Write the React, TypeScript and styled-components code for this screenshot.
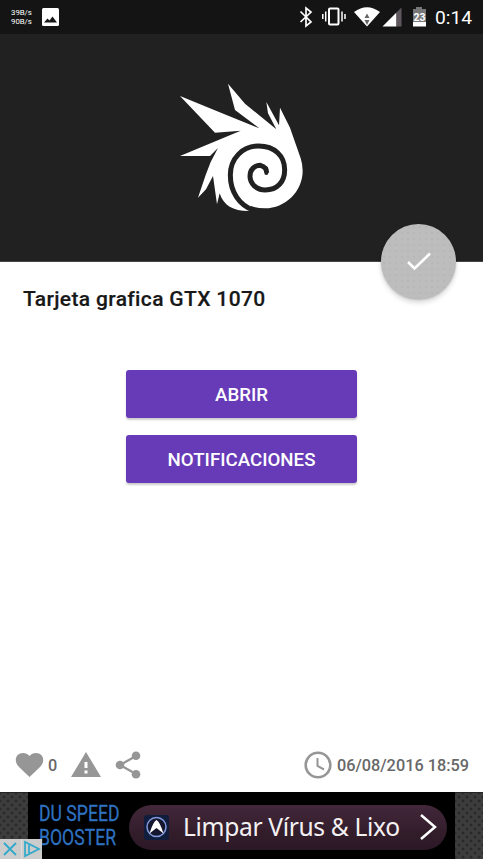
import React from "react";
import styled, { createGlobalStyle } from "styled-components";

const Global = createGlobalStyle`
  * { box-sizing: border-box; }
  body { margin: 0; background: #fff; font-family: Roboto, sans-serif; }
  svg { display: block; flex: none; }
`;
const Screen = styled.main`
  width: 483px; height: 859px; overflow: hidden;
  display: flex; flex-direction: column; background: #fff;
`;
const StatusBar = styled.header`
  height: 34px; flex: none; display: flex; align-items: center;
  padding: 0 11px; background: #141414; color: #fff;
`;
const Traffic = styled.div`
  width: 31px; font-size: 7.8px; line-height: 9px; font-weight: 400;
  white-space: pre;
`;
const StatusIcons = styled.div`margin-left: auto; display: flex; align-items: center;`;
const Clock = styled.time`
  width: 37px; margin-left: 3px; font-size: 19.2px; line-height: 24px;
  font-weight: 400; white-space: nowrap; padding-top: 2px;
`;
const Hero = styled.section`
  position: relative; height: 228px; flex: none; background: #212121;
  border-bottom: 1px solid #444; padding: 41px 0 0 170px;
`;
const CheckButton = styled.button`
  position: absolute; left: 381px; top: 190px; width: 75px; height: 75px;
  border: 0; border-radius: 50%; padding: 0; color: #fff;
  display: grid; place-items: center;
  background: radial-gradient(circle, #adadad 0.5px, transparent 0.8px) 0 0 / 6px 6px, #bdbdbd;
  box-shadow: 0 4px 5px rgba(0,0,0,.14), 0 1px 2px rgba(0,0,0,.18);
`;
const Content = styled.section`flex: 1; display: flex; flex-direction: column; align-items: center;`;
const Title = styled.h1`
  align-self: stretch; margin: 24px 0 0 23px; height: 26px;
  font-size: 21px; line-height: 26px; font-weight: 500; color: #181818;
  letter-spacing: .35px; font-variant-ligatures: none;
  -webkit-text-stroke: .2px #181818; white-space: nowrap;
`;
const Actions = styled.div`margin-top: 58px; display: flex; flex-direction: column; gap: 16.5px;`;
const Action = styled.button`
  width: 231px; height: 48px; border: 0; border-radius: 3px; background: #673ab7;
  color: #fff; font: 500 18.7px/24px Roboto, sans-serif; padding: 2px 0 0;
  box-shadow: 0 2px 2px rgba(0,0,0,.2);
`;
const Meta = styled.footer`
  height: 54px; flex: none; padding: 0 14px 0 15px;
  display: flex; align-items: center; color: #969696;
`;
const MetaText = styled.span`
  color: #686868; font-size: 16.3px; line-height: 24px; font-weight: 500;
  white-space: nowrap; padding-top: 1px;
`;
const Count = styled(MetaText)`width: 23px; margin-left: 4px;`;
const Share = styled.div`margin-left: 14px;`;
const Stamp = styled.div`margin-left: auto; display: flex; gap: 5px; align-items: center;`;
const Ad = styled.aside`
  position: relative; height: 67px; flex: none; display: flex; background: #000;
`;
const Mesh = styled.div`
  width: 28px; flex: none;
  background: radial-gradient(circle, #2b2b2b 1.3px, transparent 1.8px) 0 0 / 8px 8px,
    radial-gradient(circle, #2b2b2b 1.3px, transparent 1.8px) 4px 4px / 8px 8px, #3d3d3d;
  border-top: 1px solid #242424;
`;
const Brand = styled.div`width: 101px; flex: none; padding: 10px 0 0 11px; color: #2e71c0;`;
const BrandLine = styled.div`
  font-size: 22px; line-height: 24px; white-space: nowrap;
  -webkit-text-stroke: .3px #2e71c0;
  transform: scaleX(.8); transform-origin: left;
`;
const Offer = styled.div`
  width: 318px; height: 45px; flex: none; margin: 13px 8px 0 0; padding: 0 9px 0 15px;
  border-radius: 23px; display: flex; align-items: center; color: #f4f1f3;
  background: linear-gradient(#42283a, #331d2b 60%, #2b1826);
`;
const OfferText = styled.span`
  margin-left: 14px; width: 235px; white-space: nowrap;
  font: 400 24.6px/30px "Noto Sans", sans-serif; letter-spacing: -.35px; padding-bottom: 2px;
`;
const AdControls = styled.div`
  position: absolute; left: 0; bottom: 0; width: 42px; height: 20px;
  background: #ccc; display: flex;
`;

const Logo = () => (
  <svg width="140" height="145" viewBox="0 0 420 435">
    <path fill="#fff" d="M30 63L160 116L268 160L195 105L174 26L225 86L319 163L294 115L289 81L327 151L330 98L360 158L392 250Q398 268 398 288C398 350 345 400 285 400Q260 400 242 392L247 408C194 411 161 394 149 355L141 388L129 303L108 343L84 368L107 300L122 261L144 219L120 243L30 243L212 167L135 173Z" />
    <path fill="none" stroke="#212121" strokeWidth="15" d="M251 406C208 391 181 351 181 300C181 251 217 213 266 213C314 213 344 243 344 284C344 322 321 345 286 345C259 345 240 326 240 304C240 284 253 271 271 271Q290 276 290 293" />
    <circle cx="289" cy="294" r="6" fill="#212121" />
  </svg>
);

const SystemIcons = () => (
  <svg width="172" height="34" viewBox="0 0 172 34">
    <path fill="none" stroke="#fff" strokeWidth="1.7" d="M40.500 11.500L51 22L46 26V8L51 12L40.500 22" />
    <g fill="none" stroke="#fff">
      <rect x="69" y="8.500" width="9.500" height="16" strokeWidth="2" rx="1" />
      <path strokeWidth="1.500" d="M65.700 11.500V21.500M62.800 14V19M82 11.500V21.500M85 14V19" />
    </g>
    <path fill="#fff" d="M94 12Q107 2.500 120 12L107 26.500Z" />
    <path fill="#666" d="M107 13.500l2.500 4.500h-5zM104.500 20h5l-2.500 5z" />
    <path fill="#fff" d="M122.500 26.500l14-14v14z" />
    <path fill="#5e585e" d="M136.500 12.500l5-5v19h-5z" />
    <path fill="#777" d="M156 7h6v2h4v14h-13V9h3z" />
    <path fill="#fff" d="M153 22h13v4.500h-13z" />
    <text x="159.500" y="20.500" textAnchor="middle" fill="#fff" fontFamily="Roboto" fontSize="10.500" fontWeight="700">23</text>
  </svg>
);

export default function App() {
  return (
    <>
      <Global />
      <Screen>
        <StatusBar>
          <Traffic>{"39B/s\n90B/s"}</Traffic>
          <svg width="18" height="18" viewBox="0 0 18 18"><rect width="17" height="18" rx="1.500" fill="#fff" /><path d="M2 14.500l3.500-4 2 2 3-4 4.500 6z" fill="#171717" /></svg>
          <StatusIcons>
            <SystemIcons />
            <Clock>0:14</Clock>
          </StatusIcons>
        </StatusBar>
        <Hero>
          <Logo />
          <CheckButton aria-label="Confirmar"><svg width="26" height="22" viewBox="0 0 26 22"><path d="M2 11L8.500 17.500L24 2.500" fill="none" stroke="#fff" strokeWidth="2.500" /></svg></CheckButton>
        </Hero>
        <Content>
          <Title>Tarjeta grafica GTX 1070</Title>
          <Actions><Action>ABRIR</Action><Action>NOTIFICACIONES</Action></Actions>
        </Content>
        <Meta>
          <svg width="29" height="28" viewBox="0 0 29 28"><path fill="currentColor" d="M14.500 26L4 16C-2 10 1 2 8 2Q12 2 14.500 5Q17 2 21 2C28 2 31 10 25 16Z" /></svg>
          <Count>0</Count>
          <svg width="30" height="28" viewBox="0 0 30 28"><path fill="currentColor" d="M15 1L30 26H0Z" /><path d="M15 11v6M15 19.500v3" stroke="#fff" strokeWidth="3" /></svg>
          <Share><svg width="27" height="28" viewBox="0 0 27 28"><g fill="currentColor"><circle cx="5" cy="14" r="4.300" /><circle cx="21" cy="4.700" r="4.300" /><circle cx="21" cy="23.300" r="4.300" /></g><path d="M21 5L5 14L21 23" fill="none" stroke="currentColor" strokeWidth="2.300" /></svg></Share>
          <Stamp>
            <svg width="28" height="28" viewBox="0 0 28 28"><g fill="none" stroke="currentColor" strokeWidth="2.600"><circle cx="14" cy="14" r="12.300" /><path d="M13.500 7V15L20 18.500" strokeWidth="2" /></g></svg>
            <MetaText>06/08/2016 18:59</MetaText>
          </Stamp>
        </Meta>
        <Ad>
          <Mesh />
          <Brand><BrandLine>DU SPEED</BrandLine><BrandLine>BOOSTER</BrandLine></Brand>
          <Offer>
            <svg width="25" height="27" viewBox="0 0 25 27"><rect y="1" width="25" height="25" rx="3" fill="#101d3c" /><circle cx="12.500" cy="13" r="9.500" fill="#14172d" stroke="#8498dc" strokeWidth="1.500" /><path d="M5.500 19.500Q9 8 12.500 6Q16 8 19.500 19.500L12.500 14Z" fill="#fff" /></svg>
            <OfferText>Limpar Vírus &amp; Lixo</OfferText>
            <svg width="20" height="28" viewBox="0 0 20 28"><path d="M3 1L17 13L3 25" fill="none" stroke="#fff" strokeWidth="2.500" /></svg>
          </Offer>
          <Mesh />
          <AdControls>
            <svg width="21" height="20" viewBox="0 0 21 20"><path d="M4 4L16 16M16 4L4 16" stroke="#30a9cb" strokeWidth="1.800" /></svg>
            <svg width="21" height="20" viewBox="0 0 21 20"><path d="M0 0V20" stroke="#eee" /><path d="M4 3V17L18 10ZM8 6V14" fill="none" stroke="#30a9cb" strokeWidth="1.700" /></svg>
          </AdControls>
        </Ad>
      </Screen>
    </>
  );
}
